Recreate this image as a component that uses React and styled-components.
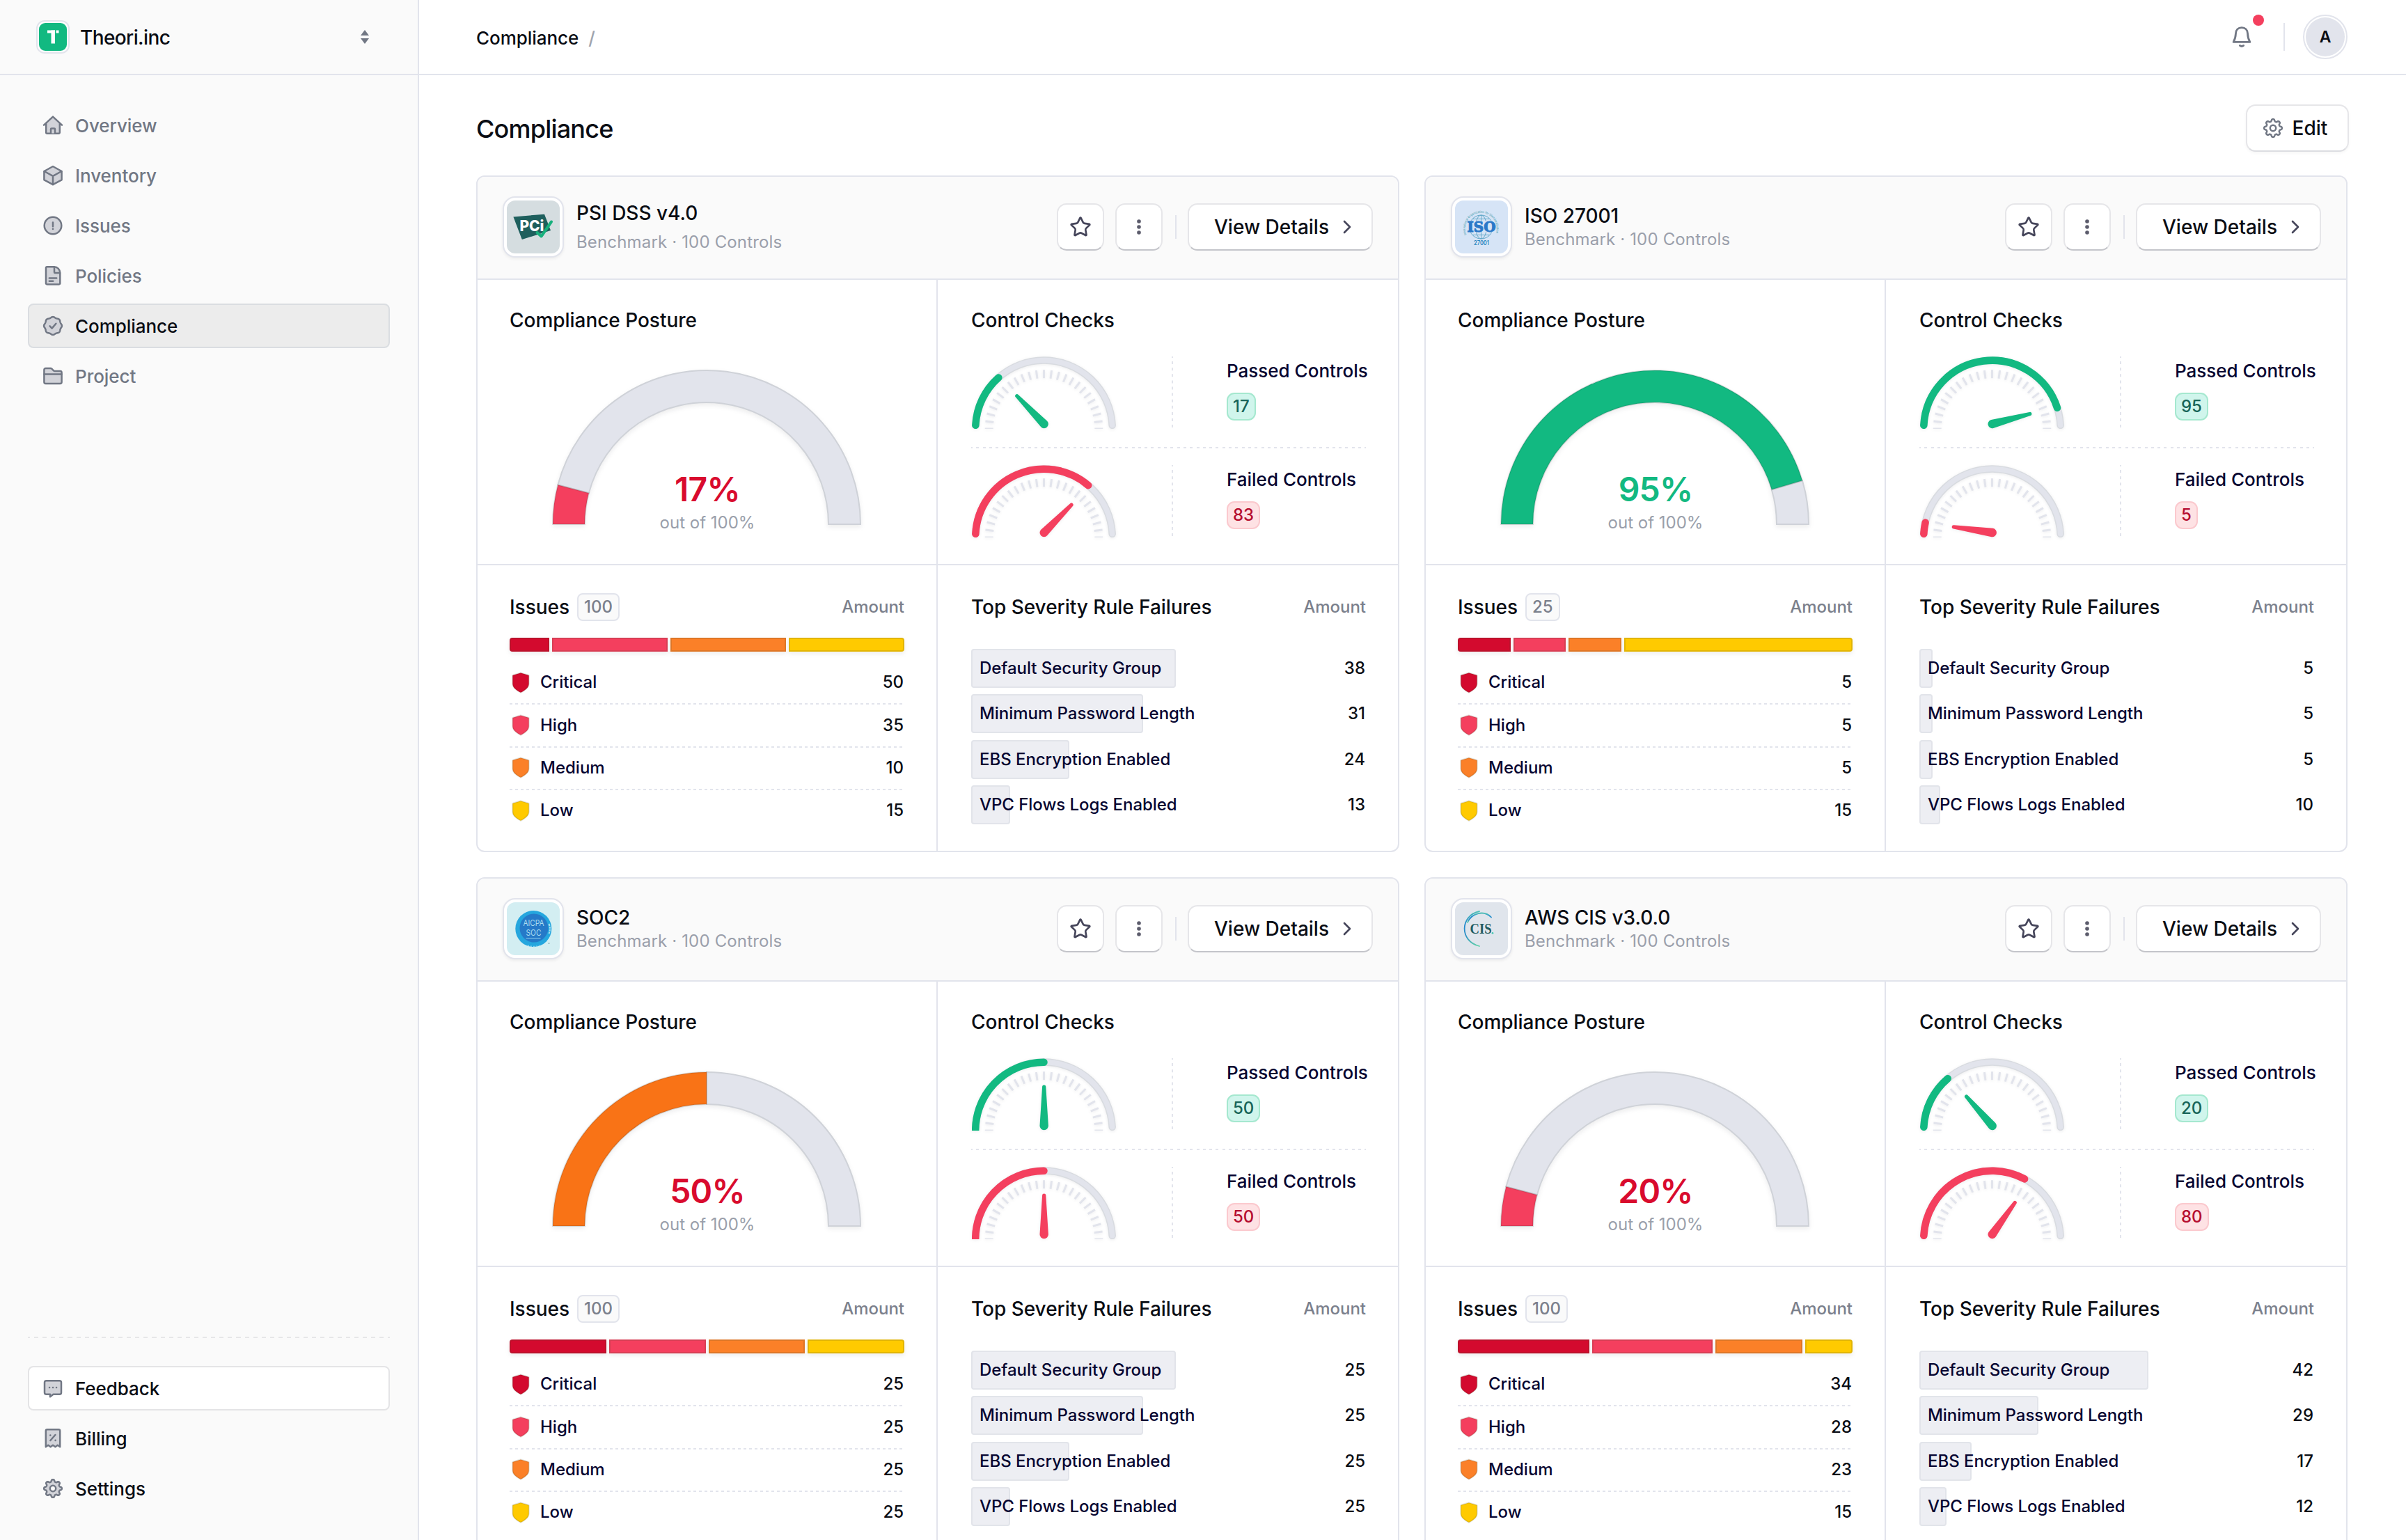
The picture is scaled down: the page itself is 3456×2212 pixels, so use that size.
import styled, { createGlobalStyle } from "styled-components";
import { Star } from "lucide-react";

const GlobalStyle = createGlobalStyle`
  * {
    box-sizing: border-box;
  }

  body {
    margin: 0;
    background: #fff;
    color: #0a0d14;
    font-family: Inter, "Liberation Sans", sans-serif;
    font-weight: 500;
  }

  h1, h2, h3, p {
    margin: 0;
    font-weight: 500;
  }

  svg {
    display: block;
    flex: none;
  }
`;

const LINE = "#e2e4ec";
const GREEN = "#12b981";
const RED = "#f43f5e";
const ORANGE = "#f97316";

/* ---------- layout ---------- */

const Page = styled.div`
  display: flex;
  width: 3456px;
  height: 2212px;
  overflow: hidden;
`;

const Sidebar = styled.aside`
  display: flex;
  flex-direction: column;
  flex: none;
  width: 602px;
  background: #fafafa;
  border-right: 2px solid ${LINE};
`;

const Workspace = styled.div`
  display: flex;
  align-items: center;
  height: 108px;
  padding: 0 68px 0 52px;
  border-bottom: 2px solid ${LINE};
`;

const WorkspaceLogo = styled.div`
  display: grid;
  place-items: center;
  width: 48px;
  height: 48px;
  margin-right: 15px;
  background: #fff;
  border: 2px solid ${LINE};
  border-radius: 12px;
`;

const WorkspaceName = styled.span`
  flex: 1;
  padding-top: 2px;
  font-size: 28px;
  letter-spacing: -0.6px;
`;

const Nav = styled.nav`
  display: flex;
  flex-direction: column;
  gap: 8px;
  padding: 40px 40px 0;
`;

const NavFooter = styled(Nav)`
  margin-top: auto;
  padding: 0 40px 42px;
`;

const NavItem = styled.a`
  display: flex;
  align-items: center;
  gap: 16px;
  height: 64px;
  padding: 0 18px;
  font-size: 26px;
  letter-spacing: -0.05px;
  color: ${(p) => (p.$strong ? "#0a0d14" : "#717784")};
  background: ${(p) => p.$fill || "transparent"};
  border: 2px solid ${(p) => p.$edge || "transparent"};
  border-radius: 8px;
`;

const Content = styled.div`
  flex: 1;
  min-width: 0;
`;

const TopBar = styled.header`
  display: flex;
  align-items: center;
  height: 108px;
  padding: 0 84px 0 82px;
  border-bottom: 2px solid ${LINE};
`;

const Crumbs = styled.div`
  display: flex;
  flex: 1;
  gap: 14px;
  padding-top: 2px;
  font-size: 26px;
  letter-spacing: -0.05px;

  span {
    color: #a0a4ae;
  }
`;

const Bell = styled.div`
  position: relative;
  margin-right: 44px;
`;

const Dot = styled.i`
  position: absolute;
  top: -15px;
  left: 32px;
  width: 16px;
  height: 16px;
  background: ${RED};
  border-radius: 50%;
`;

const Divider = styled.i`
  width: 2px;
  height: ${(p) => p.$size}px;
  background: ${LINE};
`;

const Avatar = styled.div`
  display: grid;
  place-items: center;
  width: 64px;
  height: 64px;
  margin-left: 26px;
  font-size: 23px;
  font-weight: 600;
  background: ${LINE};
  background-clip: content-box;
  padding: 2px;
  border: 2px solid ${LINE};
  border-radius: 50%;
`;

const Main = styled.main`
  padding: 42px 84px 0 82px;
`;

const Heading = styled.div`
  display: flex;
  align-items: center;
  justify-content: space-between;
  height: 68px;
  margin: 0 -2px 34px 0;

  h1 {
    padding-top: 2px;
    font-size: 36px;
    letter-spacing: -0.8px;
  }
`;

const Button = styled.button`
  display: flex;
  align-items: center;
  justify-content: center;
  width: ${(p) => p.$width || 68}px;
  height: 68px;
  padding: ${(p) => p.$pad || 0};
  gap: ${(p) => p.$gap || 0}px;
  font: 500 28px Inter, "Liberation Sans", sans-serif;
  color: #0a0d14;
  background: #fff;
  border: 2px solid #e6e6e9;
  border-bottom-color: ${(p) => (p.$soft ? "#dcdde1" : "#c4c5ca")};
  border-radius: 14px;
  box-shadow: ${(p) => (p.$soft ? "0 2px 4px rgba(10, 13, 20, 0.04)" : "none")};
`;

/* ---------- card ---------- */

const Cards = styled.div`
  display: grid;
  grid-template-columns: 1326px 1326px;
  gap: 36px;
`;

const CardBox = styled.section`
  height: 972px;
  overflow: hidden;
  border: 2px solid ${LINE};
  border-radius: 12px;
`;

const CardHeader = styled.div`
  display: flex;
  align-items: center;
  height: 148px;
  padding: 0 36px 2px;
  background: #fafafa;
  border-bottom: 2px solid ${LINE};
`;

const LogoFrame = styled.div`
  display: grid;
  place-items: center;
  width: 88px;
  height: 88px;
  margin-right: 18px;
  background: #fff;
  border: 2px solid ${LINE};
  border-radius: 18px;
  box-shadow: 0 2px 4px rgba(10, 13, 20, 0.06);
`;

const LogoTile = styled.div`
  width: 76px;
  height: 76px;
  background: ${(p) => p.$tint};
  border-radius: 12px;
`;

const CardTitle = styled.div`
  display: flex;
  flex: 1;
  flex-direction: column;
  gap: ${(p) => p.$gap}px;
  padding-top: 2px;
  line-height: 34px;

  h2 {
    font-size: 28px;
  }

  p {
    font-size: 24px;
    font-weight: 400;
    letter-spacing: 0.16px;
    color: #9a9fab;
  }
`;

const Actions = styled.div`
  display: flex;
  align-items: center;

  button + button {
    margin-left: 16px;
  }

  i {
    margin: 0 16px 0 18px;
  }
`;

const Quadrants = styled.div`
  display: grid;
  grid-template-columns: 661px 661px;
  grid-template-rows: 410px 410px;
`;

const Panel = styled.div`
  padding: ${(p) => (p.$lower ? 40 : 38)}px 46px 0 ${(p) => (p.$right ? 48 : 46)}px;
  border-right: ${(p) => (p.$right ? 0 : 2)}px solid ${LINE};
  border-bottom: ${(p) => (p.$lower ? 0 : 2)}px solid ${LINE};
`;

const PanelTitle = styled.div`
  display: flex;
  align-items: center;
  height: 40px;
  line-height: 40px;

  h3 {
    font-size: 28px;
    letter-spacing: -0.03px;
  }

  span {
    margin-left: auto;
    font-size: 24px;
    color: #7b808c;
  }
`;

const Count = styled.b`
  height: 40px;
  margin-left: 11px;
  padding: 0 8px;
  font-size: 24px;
  font-weight: 500;
  line-height: 36px;
  color: #7b808c;
  background: #fafafa;
  border: 2px solid ${LINE};
  border-radius: 8px;
`;

const Posture = styled.div`
  display: grid;
  justify-items: center;
  height: 236px;
  margin-top: 51px;

  > * {
    grid-area: 1 / 1;
  }

  svg {
    margin-right: 2px;
    overflow: visible;
    filter: drop-shadow(0 3px 3px rgba(10, 13, 20, 0.08));
  }
`;

const Score = styled.div`
  align-self: end;
  padding-left: 1px;
  text-align: center;
  font-size: 24px;
  font-weight: 400;
  line-height: 32px;
  color: #9a9fab;

  strong {
    display: block;
    margin-bottom: 4px;
    font-size: 48px;
    font-weight: 600;
    letter-spacing: -0.8px;
    line-height: 56px;
    color: ${(p) => p.$color};
  }
`;

const CheckRow = styled.div`
  display: flex;
  height: 104px;
  margin-top: ${(p) => p.$top}px;
  font-size: 26px;
  line-height: 42px;
  color: #060531;
`;

const DialBox = styled.div`
  flex: none;
  width: 288px;
  padding-left: 1px;

  svg {
    filter: drop-shadow(0 1px 2px rgba(10, 13, 20, 0.08));
  }
`;

const CheckText = styled.div`
  margin-left: 77px;
  white-space: nowrap;
`;

const Pill = styled.div`
  width: fit-content;
  height: 40px;
  margin-top: 10px;
  padding: 0 7px;
  font-size: 24px;
  line-height: 36px;
  color: ${(p) => (p.$bad ? "#b50d2f" : "#176458")};
  background: ${(p) => (p.$bad ? "#fee2e4" : "#d0f5ec")};
  border: 2px solid ${(p) => (p.$bad ? "#fbc9ce" : "#a5e8cf")};
  border-radius: 11px;
`;

const Stack = styled.div`
  display: flex;
  gap: 4px;
  height: 20px;
  margin: 24px 0 15px;
  border-radius: 4px;
  filter: drop-shadow(0 3px 3px rgba(10, 13, 20, 0.07));
`;

const Segment = styled.div`
  background: ${(p) => p.$color};
  border: 2px solid rgba(60, 60, 30, 0.15);

  &:first-child {
    border-radius: 4px 0 0 4px;
  }

  &:last-child {
    border-radius: 0 4px 4px 0;
  }
`;

const IssueRow = styled.div`
  display: flex;
  align-items: center;
  height: 61.4px;
  padding: 0 1px 4px 2px;
  font-size: 24px;
  color: #060531;
  background: ${(p) =>
    p.$last
      ? "none"
      : `repeating-linear-gradient(90deg, ${LINE} 0 4px, transparent 4px 8px) 0 100% / 100% 2px no-repeat`};

  b {
    margin-left: auto;
    font-weight: 500;
    color: #0a0d14;
  }
`;

const IssueName = styled.span`
  margin-left: 14px;
`;

const Rules = styled.div`
  display: flex;
  flex-direction: column;
  gap: 9.33px;
  margin-top: 40px;
`;

const Rule = styled.div`
  display: grid;
  align-items: center;
  height: 56px;
  font-size: 24px;
  color: #060531;

  > * {
    grid-area: 1 / 1;
  }

  span {
    padding: 0 0 1px 12px;
    letter-spacing: -0.04px;
  }

  b {
    padding: 0 1px 1px 0;
    justify-self: end;
    font-weight: 500;
    color: #0a0d14;
  }
`;

const RuleBar = styled.div`
  height: 56px;
  background: #edeef3;
  border: 2px solid #e2e4ea;
  border-radius: 4px;
`;

/* ---------- icons ---------- */

// closed outline whose radius waves around the centre
function wavy(cx, cy, base, depth, lobes, sharp) {
  const pts = [];
  for (let i = 0; i < 160; i++) {
    const t = (i / 160) * Math.PI * 2;
    const wave = Math.tanh(sharp * Math.cos(lobes * t)) / Math.tanh(sharp);
    const r = base + depth * wave;
    pts.push(`${(cx + r * Math.sin(t)).toFixed(2)} ${(cy - r * Math.cos(t)).toFixed(2)}`);
  }
  return `M${pts.join("L")}Z`;
}

const SEAL = wavy(16, 16, 12.3, 0.6, 8, 0.5);
const GEAR = wavy(16, 16, 11.3, 1.5, 8, 1.6);

function Icon({ children, fill = "#d2d3d9" }) {
  return (
    <svg
      width="32"
      height="32"
      viewBox="0 0 32 32"
      fill={fill}
      stroke="#717784"
      strokeWidth="2.5"
      strokeLinecap="round"
      strokeLinejoin="round"
    >
      {children}
    </svg>
  );
}

const icons = {
  home: (
    <Icon>
      <path d="M6.2 13V26.2a1.5 1.5 0 0 0 1.5 1.5H24.3a1.5 1.5 0 0 0 1.5-1.5V13L16 3.8Z" stroke="none" />
      <path d="M3 15.6 16 3.6 29 15.6M6.2 13V26.2a1.5 1.5 0 0 0 1.5 1.5H24.3a1.5 1.5 0 0 0 1.5-1.5V13" fill="none" />
      <path d="M13 27.5v-6a1 1 0 0 1 1-1h4a1 1 0 0 1 1 1v6" />
    </Icon>
  ),
  box: (
    <Icon>
      <path d="M16 3 28.6 10V22.3L16 29.2 3.4 22.3V10Z" />
      <path d="M3.6 10 16 16.8 28.4 10M16 16.8V29" fill="none" />
    </Icon>
  ),
  alert: (
    <Icon>
      <circle cx="16" cy="16" r="12.3" />
      <path d="M16 11.6v5.6M16 20.8v.2" />
    </Icon>
  ),
  doc: (
    <Icon>
      <path d="M7.4 3.3H17.6c5 0 8.7 3.8 8.7 8.8V27a1.4 1.4 0 0 1-1.4 1.4H7.4A1.4 1.4 0 0 1 6 27V4.7a1.4 1.4 0 0 1 1.4-1.4Z" />
      <path d="M18 3.6V11a1 1 0 0 0 1 1h7M10.8 19.4H21.2M10.8 23.8h5.4" fill="none" />
    </Icon>
  ),
  seal: (
    <Icon>
      <path d={SEAL} />
      <path d="m11.6 16.4 3 3.2 5.8-6.8" fill="none" />
    </Icon>
  ),
  folder: (
    <Icon>
      <path d="M3.4 7.2A2.2 2.2 0 0 1 5.6 5h7.2c1 0 1.6.4 2.2 1.2l1.4 1.6c.6.8 1.2 1.2 2.2 1.2h7.8a2.2 2.2 0 0 1 2.2 2.2V24.8a2.2 2.2 0 0 1-2.2 2.2H5.6a2.2 2.2 0 0 1-2.2-2.2Z" />
      <path d="M3.6 13.4h24.8" />
    </Icon>
  ),
  chat: (
    <Icon>
      <path d="M6.5 5.2h19a2.5 2.5 0 0 1 2.5 2.5v14.5a2.5 2.5 0 0 1-2.5 2.5H16.5L12 28.3V24.7H6.5A2.5 2.5 0 0 1 4 22.2V7.7a2.5 2.5 0 0 1 2.5-2.5Z" />
      <path d="M11 15h.1M16 15h.1M21 15h.1" />
    </Icon>
  ),
  receipt: (
    <Icon>
      <path d="M5.8 28.2V5.3A2 2 0 0 1 7.8 3.3H24.2a2 2 0 0 1 2 2V28.2L22.8 25.8 19.4 28.2 16 25.8 12.6 28.2 9.2 25.8Z" />
      <path d="m12.4 19 7-8M12.3 11.6v.1M19.6 18.8v.1" />
    </Icon>
  ),
  gear: (
    <Icon>
      <path d={GEAR} />
      <circle cx="16" cy="16" r="4.2" fill="#fafafa" />
    </Icon>
  ),
};

function BellIcon() {
  return (
    <svg width="32" height="34" viewBox="0 0 32 34" fill="none" stroke="#717784" strokeWidth="2.8" strokeLinecap="round" strokeLinejoin="round">
      <path d="M16 3.6c-5.3 0-8.3 3.8-8.5 8.3-.2 5.2-1 8.5-3.4 12.5h23.8c-2.4-4-3.2-7.3-3.4-12.5C24.3 7.4 21.3 3.6 16 3.6Z" />
      <path d="M13.3 29.4c1.6 1.3 3.8 1.3 5.4 0" />
    </svg>
  );
}

function Shield({ color }) {
  return (
    <svg width="28" height="32" viewBox="0 0 28 32">
      <path
        d="M14 2.4 25 5.8a1 1 0 0 1 .7 1V18c0 5.500-4.500 9-11.700 12.800C6.800 27 2.300 23.500 2.300 18V6.800a1 1 0 0 1 .7-1Z"
        fill={color}
        stroke="rgba(60,60,30,0.15)"
        strokeWidth="2"
      />
    </svg>
  );
}

/* ---------- benchmark logos ---------- */

const logos = {
  pci: (
    <svg width="76" height="76">
      <path d="M9.4 23.4 54 19.7 63 43 21.8 56Z" fill="#1e5f5d" />
      <text x="18.5" y="44" fontSize="22" fontWeight="800" fill="#fff" textLength="35" lengthAdjust="spacingAndGlyphs">
        PCi
      </text>
      <path d="m43.5 46 6 5.5 14.5-21" fill="none" stroke="#17b07c" strokeWidth="4" strokeLinecap="round" strokeLinejoin="round" />
    </svg>
  ),
  iso: (
    <svg width="76" height="76">
      <defs>
        <path id="iso-ring" d="M16.5 49A22.5 22.5 0 1 1 58 49" />
      </defs>
      <g fill="none" stroke="#62a8c9" strokeWidth="1">
        <circle cx="37.5" cy="38" r="17" />
        <ellipse cx="37.5" cy="38" rx="8" ry="17" />
        <path d="M37.5 21v34M25 26.5h25M25 49.5h25" />
      </g>
      <path d="M16 29.5h43v16H16Z" fill="#d6e4f6" />
      <text x="17.5" y="44.5" fontFamily="DejaVu Serif, serif" fontSize="19.5" fontWeight="700" fill="#2a78c8" stroke="#2a78c8" textLength="41" lengthAdjust="spacingAndGlyphs">
        ISO
      </text>
      <text fontSize="4.6" fill="#5fa9b9" textLength="86" lengthAdjust="spacingAndGlyphs">
        <textPath href="#iso-ring" textLength="86" lengthAdjust="spacingAndGlyphs">
          International Organization for Standardization
        </textPath>
      </text>
      <text x="27" y="64" fontSize="9" fontWeight="600" fill="#2a86c0" textLength="22" lengthAdjust="spacingAndGlyphs">
        27001
      </text>
    </svg>
  ),
  soc: (
    <svg width="76" height="76">
      <circle cx="38.3" cy="38" r="26" fill="#25a6de" />
      <circle cx="39" cy="37" r="20.5" fill="#2579c8" />
      <path d="M30 62a26 26 0 0 0 17 0" fill="none" stroke="#8fd3ee" strokeWidth="1.5" strokeDasharray="2 2" />
      <path d="M60.5 31q3 7 0 14" fill="none" stroke="#a9dff2" strokeWidth="2" strokeDasharray="3 1" />
      <text x="23.5" y="34.4" fontSize="11.5" fontWeight="400" fill="#a9dcf0" textLength="30" lengthAdjust="spacingAndGlyphs">
        AICPA
      </text>
      <text x="27.5" y="48" fontSize="12" fontWeight="400" fill="#a9dcf0" textLength="22" lengthAdjust="spacingAndGlyphs">
        SOC
      </text>
      <path d="M27.5 51.5h21" stroke="#8fd3ee" />
      <circle cx="60.5" cy="59" r="1" fill="#7fa9b4" />
    </svg>
  ),
  cis: (
    <svg width="76" height="76">
      <defs>
        <linearGradient id="cis-arc" x1="0" y1="0" x2="0" y2="1">
          <stop offset="0" stopColor="#4fbfb6" />
          <stop offset="0.4" stopColor="#2389cf" />
          <stop offset="0.7" stopColor="#2a8fc4" />
          <stop offset="1" stopColor="#5fd0a8" />
        </linearGradient>
      </defs>
      <g fill="none" stroke="url(#cis-arc)" strokeLinecap="round">
        <path d="M35 13C7 19 6 56 35 63" strokeWidth="1.8" />
        <path d="M18 29c6-14 24-18 34-7.5" strokeWidth="1.8" />
      </g>
      <text x="21.5" y="45.4" fontFamily="Liberation Serif, serif" fontSize="21" fontWeight="700" fill="#1f5b60" textLength="31" lengthAdjust="spacingAndGlyphs">
        CIS
      </text>
      <circle cx="54" cy="44.3" r="1.3" fill="#3fc6b0" />
    </svg>
  ),
};

/* ---------- charts ---------- */

// angle is measured clockwise from the left end of the half circle
function polar(cx, cy, r, deg) {
  const a = (deg * Math.PI) / 180;
  return `${(cx - r * Math.cos(a)).toFixed(2)} ${(cy - r * Math.sin(a)).toFixed(2)}`;
}

function band(from, to) {
  return `M${polar(222, 222, 221, from)}A221 221 0 0 1 ${polar(222, 222, 221, to)}L${polar(222, 222, 175, to)}A175 175 0 0 0 ${polar(222, 222, 175, from)}Z`;
}

function Gauge({ angle, color }) {
  return (
    <svg width="444" height="222" viewBox="0 0 444 222">
      <path d={band(angle, 180)} fill={LINE} stroke="#cfd2d8" strokeWidth="2" />
      <path d={band(0, angle)} fill={color} />
      <path d={band(0, angle)} fill="none" stroke="rgba(40,50,50,0.15)" strokeWidth="2" />
    </svg>
  );
}

function arc(from, to) {
  return `M${polar(103.5, 104, 98.3, from)}A98.3 98.3 0 0 1 ${polar(103.5, 104, 98.3, to)}`;
}

const TICKS = Array.from({ length: 25 }, (_, i) => i * 7.5);

function Dial({ start = 3, end, needle, color }) {
  return (
    <svg width="207" height="104" viewBox="0 0 207 104" fill="none" strokeLinecap="round">
      <path d={arc(3, 177)} stroke="#d8dbe0" strokeWidth="10.5" />
      <path d={arc(3, 177)} stroke={LINE} strokeWidth="7.5" />
      {TICKS.map((t) => (
        <path key={t} d={`M${polar(103.5, 104, 72.8, t)}L${polar(103.5, 104, 84.8, t)}`} stroke={LINE} strokeWidth="3" strokeLinecap="butt" />
      ))}
      <path d={arc(start, end)} stroke={color} strokeWidth="10.5" />
      <path
        d="M-6.2 0A6.2 6.2 0 0 0 6.2 0L2.6-56A2.6 2.6 0 0 0-2.6-56Z"
        fill={color}
        transform={`translate(103.7 97) rotate(${needle - 90})`}
      />
    </svg>
  );
}

function DashedV() {
  return (
    <svg width="2" height="104">
      <path d="M1 0V104" stroke={LINE} strokeWidth="2" strokeDasharray="4 5.1" strokeDashoffset="2" />
    </svg>
  );
}

const DashedH = styled.div`
  height: 2px;
  margin-top: ${(p) => p.$top || 0}px;
  margin-bottom: ${(p) => p.$bottom || 0}px;
  background: repeating-linear-gradient(
    90deg,
    ${(p) => p.$color || LINE} 0 ${(p) => p.$dash}px,
    transparent ${(p) => p.$dash}px ${(p) => p.$pitch}px
  );
  background-position: ${(p) => -p.$dash / 2}px 0;
`;

/* ---------- data ---------- */

const SEVERITIES = [
  ["Critical", "#d30a2e"],
  ["High", "#f43f5e"],
  ["Medium", "#fb8028"],
  ["Low", "#ffca00"],
];

const RULES = [
  "Default Security Group",
  "Minimum Password Length",
  "EBS Encryption Enabled",
  "VPC Flows Logs Enabled",
];

const BENCHMARKS = [
  {
    name: "PSI DSS v4.0",
    logo: "pci",
    tint: "#d5dde0",
    gap: 8,
    score: { value: 17, angle: 14.8, color: RED, text: "#d90b2e" },
    passed: { value: 17, end: 48.5, needle: 46 },
    failed: { value: 83, end: 130.4, needle: 134.6 },
    total: 100,
    issues: [50, 35, 10, 15],
    segments: [57, 166, 166, 166],
    rules: [38, 31, 24, 13],
    bars: [294, 247, 141, 56],
  },
  {
    name: "ISO 27001",
    logo: "iso",
    tint: "#d6e4f6",
    gap: 0,
    score: { value: 95, angle: 163.5, color: GREEN, text: GREEN },
    passed: { value: 95, end: 162.1, needle: 165 },
    failed: { value: 5, end: 12.6, needle: 8.3 },
    total: 25,
    issues: [5, 5, 5, 15],
    segments: [75.5, 75.5, 75.5, 328.5],
    rules: [5, 5, 5, 10],
    bars: [19, 19, 19, 30],
  },
  {
    name: "SOC2",
    logo: "soc",
    tint: "#d3eef2",
    gap: 0,
    score: { value: 50, angle: 90, color: ORANGE, text: "#d90b2e" },
    passed: { value: 50, start: -3, end: 90, needle: 90 },
    failed: { value: 50, start: -3, end: 90, needle: 90 },
    total: 100,
    issues: [25, 25, 25, 25],
    segments: [138.75, 138.75, 138.75, 138.75],
    rules: [25, 25, 25, 25],
    bars: [294, 247, 141, 56],
  },
  {
    name: "AWS CIS v3.0.0",
    logo: "cis",
    tint: "#e0e5ec",
    gap: 0,
    score: { value: 20, angle: 14.8, color: RED, text: "#d90b2e" },
    passed: { value: 20, end: 49.6, needle: 48.5 },
    failed: { value: 80, end: 118.3, needle: 125.5 },
    total: 100,
    issues: [34, 28, 23, 15],
    segments: [188.5, 173.5, 125, 68],
    rules: [42, 29, 17, 12],
    bars: [329, 171, 75, 39],
  },
];

/* ---------- components ---------- */

function Check({ label, bad, top, check }) {
  return (
    <CheckRow $top={top}>
      <DialBox>
        <Dial start={check.start} end={check.end} needle={check.needle} color={bad ? RED : GREEN} />
      </DialBox>
      <DashedV />
      <CheckText>
        {label}
        <Pill $bad={bad}>{check.value}</Pill>
      </CheckText>
    </CheckRow>
  );
}

function BenchmarkCard({ data }) {
  return (
    <CardBox>
      <CardHeader>
        <LogoFrame>
          <LogoTile $tint={data.tint}>{logos[data.logo]}</LogoTile>
        </LogoFrame>
        <CardTitle $gap={data.gap}>
          <h2>{data.name}</h2>
          <p>Benchmark · 100 Controls</p>
        </CardTitle>
        <Actions>
          <Button aria-label="Favorite">
            <Star size={32} color="#45455a" strokeWidth={2} />
          </Button>
          <Button aria-label="More">
            <svg width="6" height="24" viewBox="0 0 6 24" fill="#5c5c6c">
              <circle cx="3" cy="4" r="2.8" />
              <circle cx="3" cy="12" r="2.8" />
              <circle cx="3" cy="20" r="2.8" />
            </svg>
          </Button>
          <Divider $size={34} />
          <Button $width={266} $gap={20} $pad="0 0 0 7px">
            View Details
            <svg width="12" height="20" viewBox="0 0 12 20" fill="none" stroke="#45455a" strokeWidth="2.6" strokeLinecap="round" strokeLinejoin="round">
              <path d="M2 2 10 10 2 18" />
            </svg>
          </Button>
        </Actions>
      </CardHeader>
      <Quadrants>
        <Panel>
          <PanelTitle>
            <h3>Compliance Posture</h3>
          </PanelTitle>
          <Posture>
            <Gauge angle={data.score.angle} color={data.score.color} />
            <Score $color={data.score.text}>
              <strong>{data.score.value}%</strong>
              out of 100%
            </Score>
          </Posture>
        </Panel>
        <Panel $right>
          <PanelTitle>
            <h3>Control Checks</h3>
          </PanelTitle>
          <Check label="Passed Controls" top={32} check={data.passed} />
          <DashedH $top={26} $bottom={24} $dash={4} $pitch={9.3} />
          <Check label="Failed Controls" bad top={0} check={data.failed} />
        </Panel>
        <Panel $lower>
          <PanelTitle>
            <h3>Issues</h3>
            <Count>{data.total}</Count>
            <span>Amount</span>
          </PanelTitle>
          <Stack>
            {SEVERITIES.map(([name, color], i) => (
              <Segment key={name} $color={color} style={{ width: data.segments[i] }} />
            ))}
          </Stack>
          {SEVERITIES.map(([name, color], i) => (
            <IssueRow key={name} $last={i === 3}>
              <Shield color={color} />
              <IssueName>{name}</IssueName>
              <b>{data.issues[i]}</b>
            </IssueRow>
          ))}
        </Panel>
        <Panel $lower $right>
          <PanelTitle>
            <h3>Top Severity Rule Failures</h3>
            <span>Amount</span>
          </PanelTitle>
          <Rules>
            {RULES.map((rule, i) => (
              <Rule key={rule}>
                <RuleBar style={{ width: data.bars[i] }} />
                <span>{rule}</span>
                <b>{data.rules[i]}</b>
              </Rule>
            ))}
          </Rules>
        </Panel>
      </Quadrants>
    </CardBox>
  );
}

export default function App() {
  return (
    <Page>
      <GlobalStyle />
      <Sidebar>
        <Workspace>
          <WorkspaceLogo>
            <svg width="40" height="40" viewBox="0 0 40 40">
              <rect width="40" height="40" rx="9" fill={GREEN} />
              <g fill="#fff">
                <rect x="12" y="10.5" width="11" height="4" />
                <rect x="17.5" y="10.5" width="5.5" height="19" />
                <rect x="24.5" y="10.5" width="4" height="4" />
              </g>
            </svg>
          </WorkspaceLogo>
          <WorkspaceName>Theori.inc</WorkspaceName>
          <svg width="16" height="20" viewBox="0 0 16 20" fill="#717784">
            <path d="M8 0 14 8H2ZM2 12H14L8 20Z" />
          </svg>
        </Workspace>
        <Nav>
          <NavItem>{icons.home}Overview</NavItem>
          <NavItem>{icons.box}Inventory</NavItem>
          <NavItem>{icons.alert}Issues</NavItem>
          <NavItem>{icons.doc}Policies</NavItem>
          <NavItem $strong $fill="#ececec" $edge="#dadde1">
            {icons.seal}Compliance
          </NavItem>
          <NavItem>{icons.folder}Project</NavItem>
        </Nav>
        <NavFooter>
          <DashedH $bottom={32} $dash={6} $pitch={12.1} $color="#e6e6e8" />
          <NavItem $strong $fill="#fff" $edge="#e4e4e6">
            {icons.chat}Feedback
          </NavItem>
          <NavItem $strong>{icons.receipt}Billing</NavItem>
          <NavItem $strong>{icons.gear}Settings</NavItem>
        </NavFooter>
      </Sidebar>
      <Content>
        <TopBar>
          <Crumbs>
            Compliance <span>/</span>
          </Crumbs>
          <Bell>
            <BellIcon />
            <Dot />
          </Bell>
          <Divider $size={40} />
          <Avatar>A</Avatar>
        </TopBar>
        <Main>
          <Heading>
            <h1>Compliance</h1>
            <Button $soft $width={148} $gap={12} $pad="0 8px 0 0">
              <Icon fill="none">
                <path d={GEAR} />
                <circle cx="16" cy="16" r="4.2" />
              </Icon>
              Edit
            </Button>
          </Heading>
          <Cards>
            {BENCHMARKS.map((b) => (
              <BenchmarkCard key={b.name} data={b} />
            ))}
          </Cards>
        </Main>
      </Content>
    </Page>
  );
}
